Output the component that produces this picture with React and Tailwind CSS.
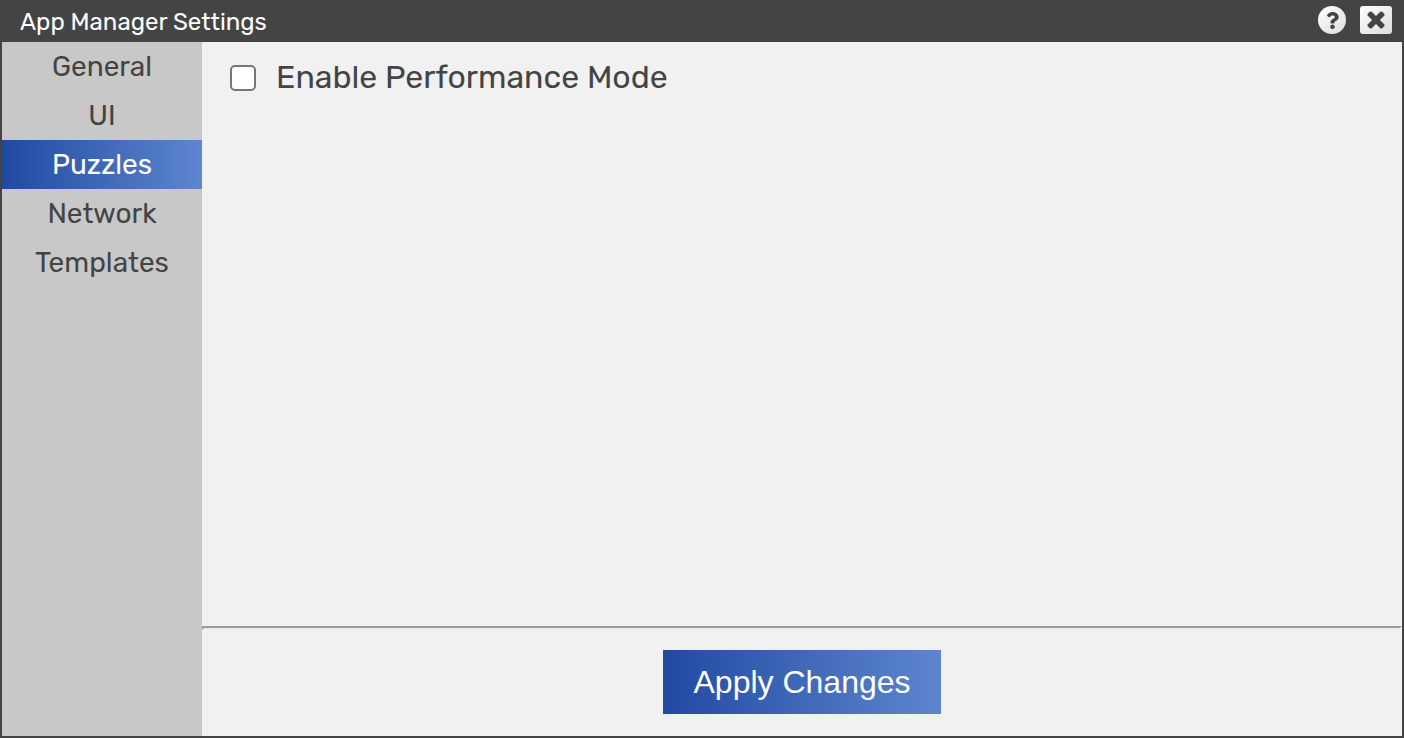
import { useState } from "react";
import { FaQuestion } from "react-icons/fa";

const TABS = ["General", "UI", "Puzzles", "Network", "Templates"];

function CloseIcon() {
  return (
    <svg viewBox="0 64 1792 1792" width="26" height="26" fill="currentColor" aria-hidden="true">
      <path d="M1490 1322q0 40-28 68l-136 136q-28 28-68 28t-68-28l-294-294-294 294q-28 28-68 28t-68-28l-136-136q-28-28-28-68t28-68l294-294-294-294q-28-28-28-68t28-68l136-136q28-28 68-28t68 28l294 294 294-294q28-28 68-28t68 28l136 136q28 28 28 68t-28 68l-294 294 294 294q28 28 28 68z" />
    </svg>
  );
}

export default function App() {
  const [active, setActive] = useState("Puzzles");
  const [performance, setPerformance] = useState(false);

  return (
    <div className="flex min-h-screen flex-col border-2 border-t-0 border-[#444] bg-[#f1f1f1] font-['Rubik','Inter',sans-serif] text-[#444]">
      <header className="flex h-[42px] items-center justify-between bg-[#444] pr-2.5 pl-[18px]">
        <h1 className="pt-0.5 text-[24px] leading-8 font-normal text-white">App Manager Settings</h1>
        <div className="flex items-center gap-[14px] pb-0.5">
          <button
            type="button"
            aria-label="Help"
            className="flex size-7 items-center justify-center rounded-full bg-linear-to-br from-white to-[#ddd]"
          >
            <FaQuestion size={17} />
          </button>
          <button
            type="button"
            aria-label="Close"
            className="flex h-7 w-8 items-center justify-center rounded-[3px] bg-linear-to-br from-white to-[#ddd]"
          >
            <CloseIcon />
          </button>
        </div>
      </header>
      <div className="flex grow">
        <nav className="flex w-[200px] flex-col bg-[#c8c8c8]">
          {TABS.map((tab) => (
            <button
              key={tab}
              type="button"
              onClick={() => setActive(tab)}
              className={
                tab === active
                  ? "h-[49px] bg-linear-to-r from-[#2249a2] via-[#4068b8] to-[#5d86ce] text-[28px] text-white"
                  : "h-[49px] text-[28px]"
              }
            >
              {tab}
            </button>
          ))}
        </nav>
        <main className="flex min-w-0 grow flex-col">
          <div className="flex grow items-start px-7 pt-4">
            <div className="flex h-10 items-center gap-5">
              <input
                id="performance"
                type="checkbox"
                checked={performance}
                onChange={(event) => setPerformance(event.target.checked)}
                className="size-[26px] appearance-none rounded-[5px] border-2 border-[#767676] bg-white checked:bg-[#2249a2]"
              />
              <label htmlFor="performance" className="pb-0.5 text-[32px] leading-[38px]">
                Enable Performance Mode
              </label>
            </div>
          </div>
          <hr className="border-2 border-t-[#9a9a9a] border-r-[#eee] border-b-[#eee] border-l-[#9a9a9a]" />
          <div className="flex justify-center pt-5 pb-[22px]">
            <button
              type="button"
              className="h-16 bg-linear-to-r from-[#2249a2] via-[#4068b8] to-[#5d86ce] px-[30px] font-['Liberation_Sans',sans-serif] text-[32px] text-white"
            >
              Apply Changes
            </button>
          </div>
        </main>
      </div>
    </div>
  );
}
